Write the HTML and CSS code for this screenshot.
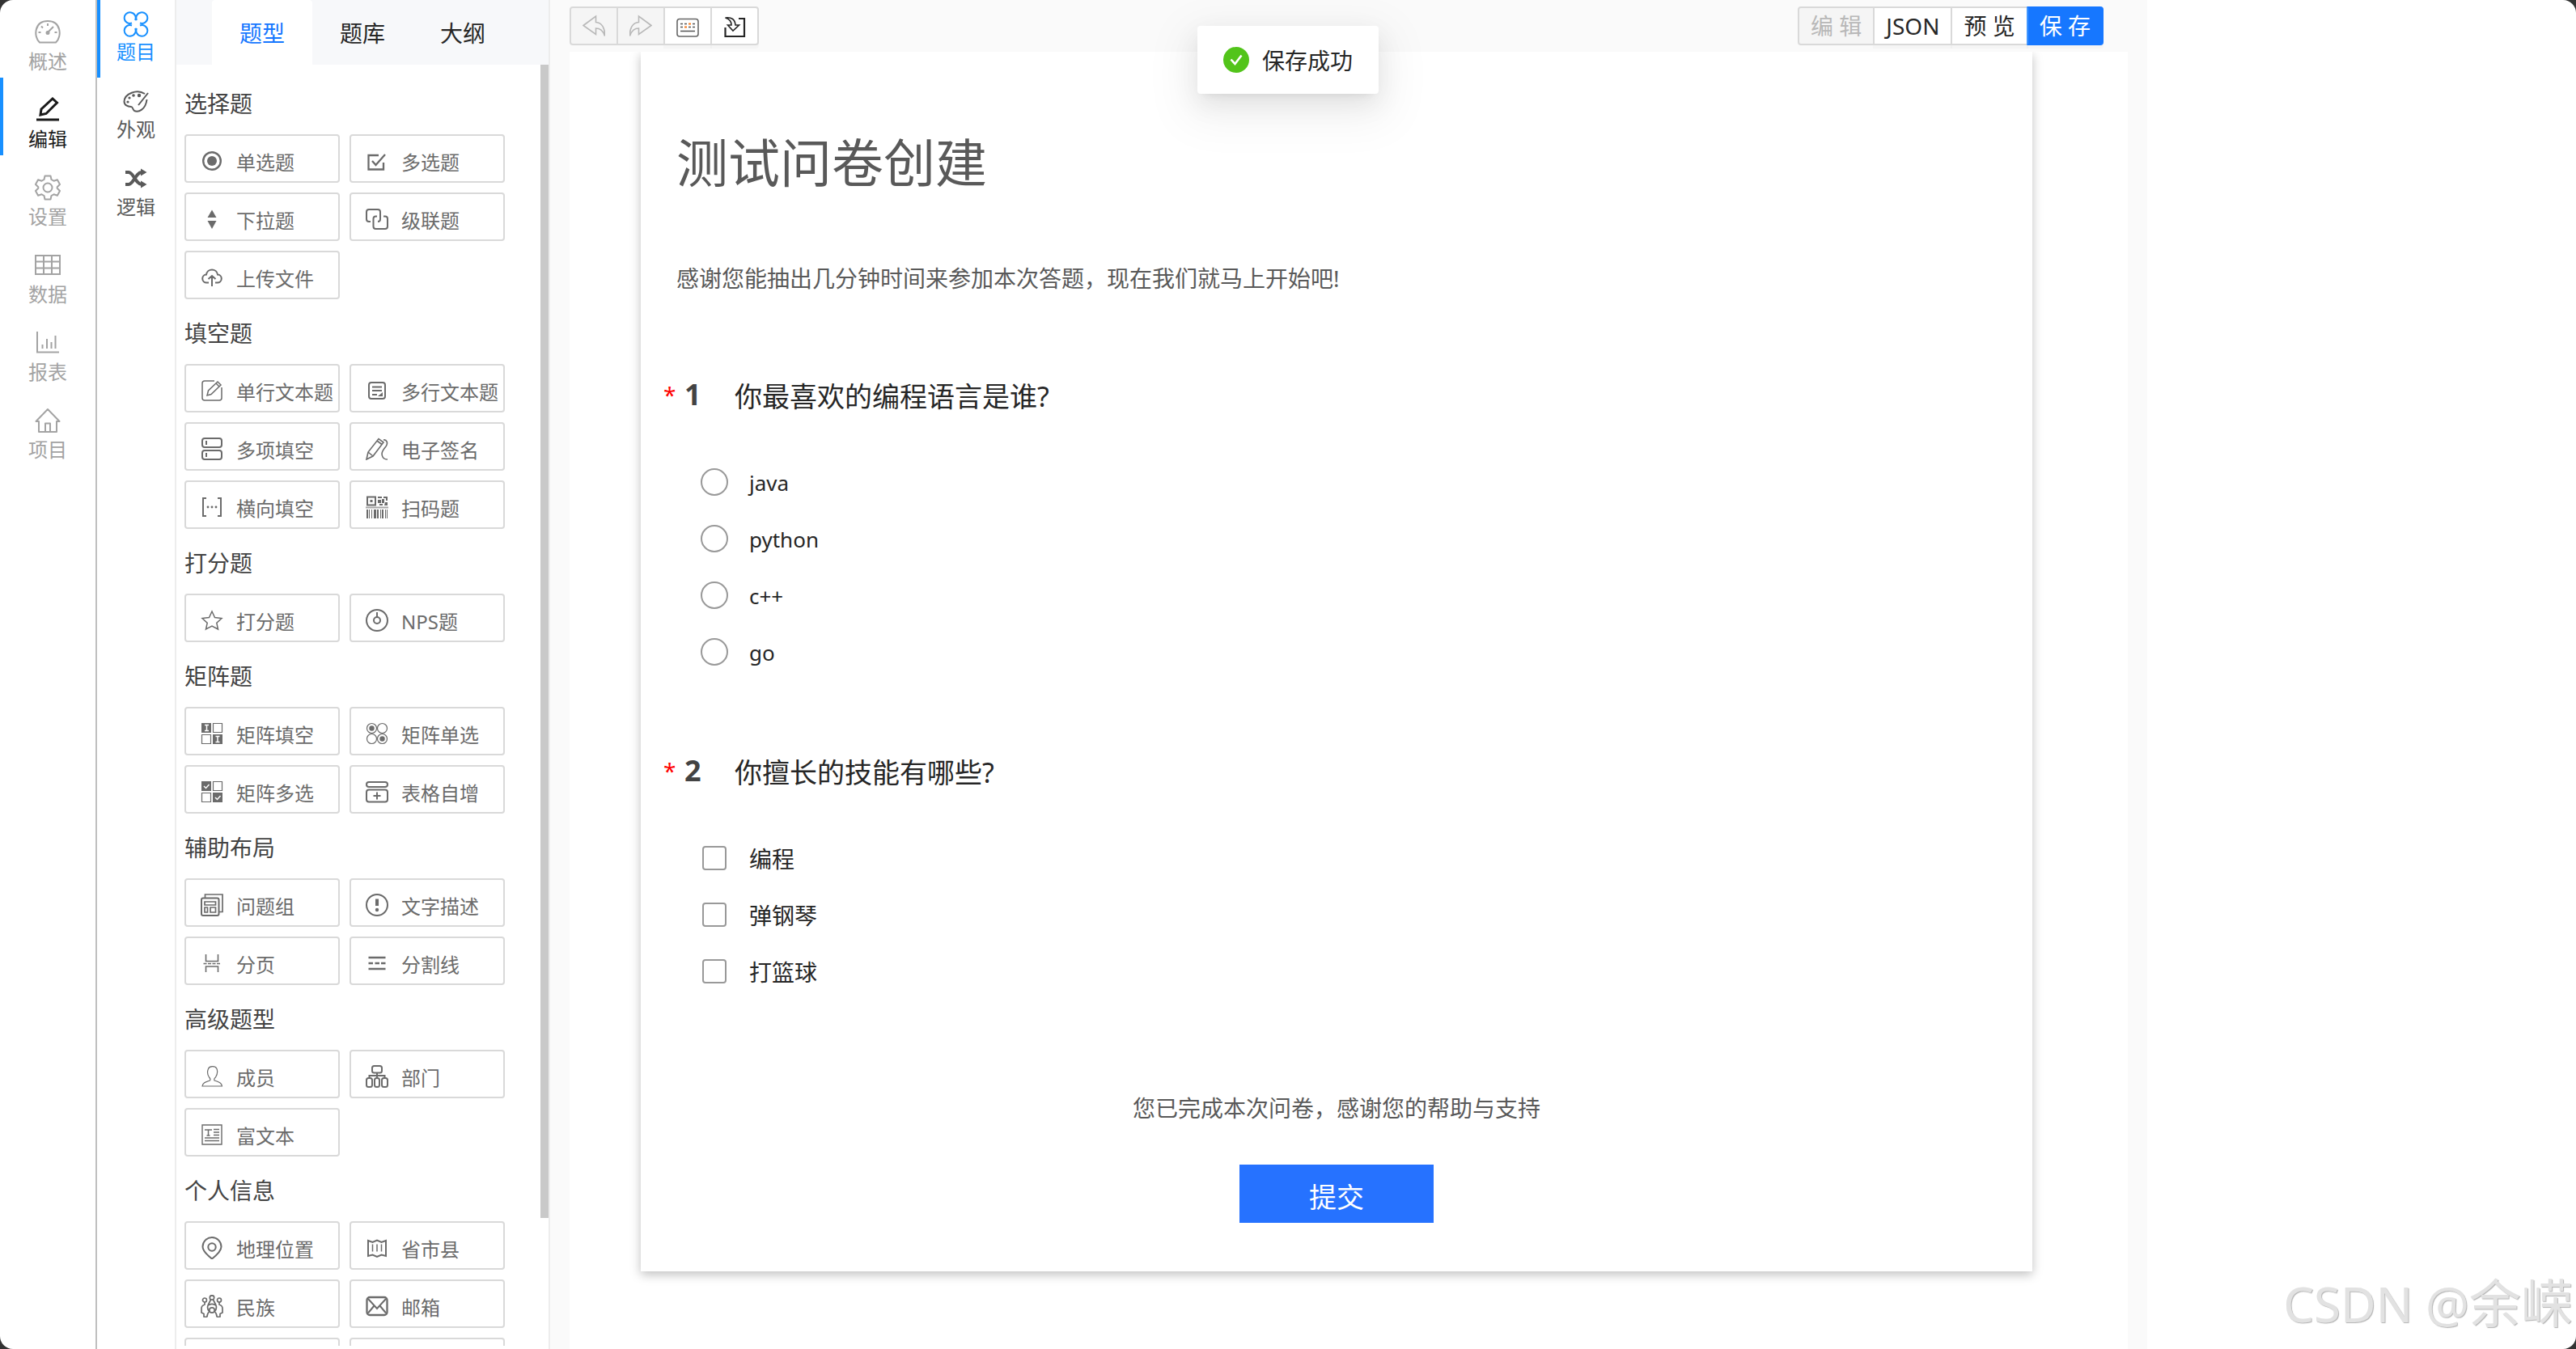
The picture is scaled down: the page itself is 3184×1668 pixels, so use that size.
FILE: index.html
```html
<!DOCTYPE html>
<html lang="zh-CN">
<head>
<meta charset="utf-8">
<title>测试问卷创建</title>
<meta name="viewport" content="width=device-width, initial-scale=1">
<link rel="stylesheet" href="styles.css">
</head>
<body>
<div class="app">
  <nav class="nav nav-main" aria-label="项目">
    <a class="nav-item" href="#overview">
      <svg class="nav-icon" viewBox="0 0 32 32"><path d="M6 28.500C-2 21-.500 2 16 2s18 19 10 26.500z"/><path d="M16 5v3M4.500 16h3M24.500 16h3M8 8.500l2 2M15 17l8-8"/><circle cx="16" cy="16.500" r="1.500"/></svg>
      <span>概述</span></a>
    <a class="nav-item active" href="#edit">
      <svg class="nav-icon bold" viewBox="0 0 32 32"><path d="M7 22l1-7L22 2l5.500 5L14 20.500z"/><path d="M2 28h28"/></svg>
      <span>编辑</span></a>
    <a class="nav-item" href="#settings">
      <svg class="nav-icon" viewBox="0 0 32 32"><path d="M12.500 1.500h7l1 4.500 3 1.700 4.400-1.400 3.100 5.700-3.300 3.200v1.600l3.300 3.200-3.100 5.700-4.400-1.400-3 1.700-1 4.500h-7l-1-4.500-3-1.700-4.400 1.400L1 20l3.300-3.200v-1.600L1 12l3.100-5.700 4.400 1.400 3-1.700z" stroke-linejoin="round"/><circle cx="16" cy="16" r="5.500"/></svg>
      <span>设置</span></a>
    <a class="nav-item" href="#data">
      <svg class="nav-icon" viewBox="0 0 32 32"><path d="M1 4h30v23H1zM1 11.500h30M1 19.500h30M11 4v23M21 4v23"/></svg>
      <span>数据</span></a>
    <a class="nav-item" href="#report">
      <svg class="nav-icon" viewBox="0 0 32 32"><path d="M3 2v25.500h27M9.500 23v-5M15 23V11M20.500 23v-8M25.500 23V7"/></svg>
      <span>报表</span></a>
    <a class="nav-item" href="#project">
      <svg class="nav-icon" viewBox="0 0 32 32"><path d="M5 17H1.500L16 2l14.500 15H27v13H5zM13 30V19.500h6V30" stroke-linejoin="round"/></svg>
      <span>项目</span></a>
  </nav>

  <nav class="nav nav-sub" aria-label="编辑">
    <a class="nav-item active" href="#questions">
      <svg class="nav-icon" viewBox="0 0 32 32"><path d="M11 14.500A7 6.800 0 1 1 15 11M21 14.500A7 6.800 0 1 0 17 11M11 17.500A7 6.800 0 1 0 15 21M21 17.500A7 6.800 0 1 1 17 21"/></svg>
      <span>题目</span></a>
    <a class="nav-item" href="#appearance">
      <svg class="nav-icon" viewBox="0 0 32 32"><path d="M27 6C17-.500 2 6 1.500 15.500 1.500 20 6 22 10 22c2.500 0 1.500 3 4 5 5 2 14-1 15.500-14M31 5L19 20"/><g class="solid"><circle cx="6" cy="16" r="1.600"/><circle cx="8" cy="11" r="1.600"/><circle cx="13" cy="8" r="1.800"/><circle cx="20" cy="8" r="2.200"/></g></svg>
      <span>外观</span></a>
    <a class="nav-item" href="#logic">
      <svg class="nav-icon heavy" viewBox="0 0 32 32"><path d="M3 7h4c6 0 9 15 16 15M3 22h4c6 0 9-15 16-15"/><path class="solid" d="M22 2.500L29.500 7 22 11.500zM22 17.500l7.500 4.500-7.500 4.500z"/></svg>
      <span>逻辑</span></a>
  </nav>

  <aside class="panel">
    <div class="tabs" role="tablist">
      <button class="tab active" role="tab" aria-selected="true">题型</button>
      <button class="tab" role="tab" aria-selected="false">题库</button>
      <button class="tab" role="tab" aria-selected="false">大纲</button>
    </div>
    <div class="list">
      <section class="group">
        <h3>选择题</h3>
        <div class="types">
          <button class="type"><svg viewBox="0 0 28 28"><circle cx="14" cy="14" r="10.800" stroke-width="2.400"/><circle class="solid" cx="14" cy="14" r="6"/></svg>单选题</button>
          <button class="type"><svg viewBox="0 0 28 28"><path d="M16 7H3.500v17.500h18.500V16M8 14l4.500 5L24 6" stroke-width="2.300"/></svg>多选题</button>
          <button class="type"><svg viewBox="0 0 28 28"><path class="solid" d="M14 2.500L19.500 12h-11zM8.500 16h11L14 26z"/></svg>下拉题</button>
          <button class="type"><svg viewBox="0 0 28 28"><path d="M6 17H4a3 3 0 0 1-3-3V5a3 3 0 0 1 3-3h11a3 3 0 0 1 3 3v9a3 3 0 0 1-3 3M14 10.500h-1.500a3 3 0 0 0-3 3V23a3 3 0 0 0 3 3H24a3 3 0 0 0 3-3v-9.500a3 3 0 0 0-3-3h-2"/></svg>级联题</button>
          <button class="type"><svg viewBox="0 0 28 28"><path d="M10 20.500H7.500A5 5 0 0 1 7 10.500C8 2.500 20 2.500 21 10.500a5 5 0 0 1-.500 10H18M14 25V12M9.500 16l4.500-4 4.500 4"/></svg>上传文件</button>
        </div>
      </section>
      <section class="group">
        <h3>填空题</h3>
        <div class="types">
          <button class="type"><svg viewBox="0 0 28 28"><path d="M17 2H5a3 3 0 0 0-3 3v18a3 3 0 0 0 3 3h18a3 3 0 0 0 3-3V10M8 20l1.500-6L21 3l4 4-12 11.500zM19 5l4 4" stroke-width="1.500"/></svg>单行文本题</button>
          <button class="type"><svg viewBox="0 0 28 28"><rect x="4" y="4" width="20" height="20" rx="3"/><path d="M8 9.500h12M8 14h12M8 19h6"/><path class="solid" d="M21 16v5h-6z"/></svg>多行文本题</button>
          <button class="type"><svg viewBox="0 0 28 28"><rect x="2" y="1" width="24" height="11" rx="3"/><rect x="2" y="16" width="24" height="11" rx="3"/><path d="M7 4v5M7 19v5"/></svg>多项填空</button>
          <button class="type"><svg viewBox="0 0 28 28"><path d="M1 27l2-9L16 1.500l6 4.500L9 23zM3 18l6 5M14 4l6 4.500M22 3c4-1 6 4 3 8-5 6-6 9-4 13 1 2 3 3 6 3" stroke-width="1.600"/></svg>电子签名</button>
          <button class="type"><svg viewBox="0 0 28 28"><path d="M7 3H3v22h4M21 3h4v22h-4"/><g class="solid"><circle cx="9" cy="14" r="1.400"/><circle cx="14" cy="14" r="1.400"/><circle cx="19" cy="14" r="1.400"/></g></svg>横向填空</button>
          <button class="type"><svg viewBox="0 0 28 28"><path d="M2 1.500h10v10H2z"/><path class="solid" d="M5.500 5h3v3h-3zM15 1h5v2h-5zM22 1h5v5h-2V3h-3zM15 5h4v4h-4zM20 4h3v5h-3zM24 8h3v4h-4zM17 10h4v2h-4zM1 17h2v11H1zM4 17h1v11H4zM7 17h1v11H7zM10 17h3v11h-3zM14 17h2v11h-2zM18 17h1v11h-1zM20 17h2v11h-2zM24 17h1v11h-1zM26 17h1v11h-1z"/><path d="M0 14.500h28" opacity=".6"/></svg>扫码题</button>
        </div>
      </section>
      <section class="group">
        <h3>打分题</h3>
        <div class="types">
          <button class="type"><svg viewBox="0 0 28 28"><path d="M14 3l3.500 7.500 8.500 1-6.200 5.700L21.500 25 14 21l-7.500 4 1.700-7.800L2 11.500l8.500-1z" stroke-width="1.500"/></svg>打分题</button>
          <button class="type"><svg viewBox="0 0 28 28"><circle cx="14" cy="14" r="13"/><circle cx="14" cy="14" r="4"/><path d="M14 4v6"/></svg>NPS题</button>
        </div>
      </section>
      <section class="group">
        <h3>矩阵题</h3>
        <div class="types">
          <button class="type"><svg viewBox="0 0 28 28"><path class="solid" d="M1 1h12v12H1zM15 15h12v12H15z"/><path d="M15.500 1.500h11v11h-11zM1.500 15.500h11v11h-11z" stroke-width="1.200"/><path class="light" d="M5 3.500h5M5 10.500h5M7.500 3.500v7M18.500 17.500h5M18.500 24.500h5M21 17.500v7"/></svg>矩阵填空</button>
          <button class="type"><svg viewBox="0 0 28 28"><g stroke-width="1.200"><circle cx="7.500" cy="7.500" r="6"/><circle cx="20.500" cy="7.500" r="6"/><circle cx="7.500" cy="20.500" r="6"/><circle cx="20.500" cy="20.500" r="6"/></g><g class="solid"><circle cx="7.500" cy="7.500" r="3.200"/><circle cx="20.500" cy="20.500" r="3.200"/></g></svg>矩阵单选</button>
          <button class="type"><svg viewBox="0 0 28 28"><path class="solid" d="M1 1h12v12H1zM15 15h12v12H15z"/><path d="M15.500 1.500h11v11h-11zM1.500 15.500h11v11h-11z" stroke-width="1.200"/><path class="light" d="M4 7l2.500 2.500L10.500 5M18 21l2.500 2.500 4-4.500"/></svg>矩阵多选</button>
          <button class="type"><svg viewBox="0 0 28 28"><rect x="1" y="2" width="26" height="6" rx="3"/><rect x="1" y="11.500" width="26" height="15" rx="3"/><path d="M14 14.500v9M9.500 19h9"/></svg>表格自增</button>
        </div>
      </section>
      <section class="group">
        <h3>辅助布局</h3>
        <div class="types">
          <button class="type"><svg viewBox="0 0 28 28"><rect x="1" y="5.500" width="21.500" height="21.500" rx="2"/><path d="M5.500 5V1H27v21.500h-4M5 10h13.500v4H5zM5 17h3.500v6H5zM12 17h6.500v6H12z" stroke-width="1.700"/></svg>问题组</button>
          <button class="type"><svg viewBox="0 0 28 28"><circle cx="14" cy="14" r="13"/><path d="M14 6.500v8.500" stroke-width="4"/><circle class="solid" cx="14" cy="20" r="2.200"/></svg>文字描述</button>
          <button class="type"><svg viewBox="0 0 28 28"><path d="M6.500 3v8.500h15V3M6.500 25v-7h15v7" stroke-width="1.600"/><path d="M3.500 14.500h21" stroke-dasharray="4 1.500" stroke-width="1.500"/></svg>分页</button>
          <button class="type"><svg viewBox="0 0 28 28"><path d="M3.500 7h21M3.500 14h5.500M11.500 14h5.500M19 14h5.500M3.500 21h21" stroke-width="2.400"/></svg>分割线</button>
        </div>
      </section>
      <section class="group">
        <h3>高级题型</h3>
        <div class="types">
          <button class="type"><svg viewBox="0 0 28 28"><path d="M17 19c6 2 9 3 9.500 7H2c.500-4 3.500-5 9.500-7 1-1.500 0-3-1-4-2-3-2.500-7-1-10.500C11 1 18 .500 20 4.500c1 3 .5 7.500-1.500 10.500-1.500 1-2 2.500-1.500 4z" stroke-width="1.200"/></svg>成员</button>
          <button class="type"><svg viewBox="0 0 28 28"><rect x="8" y="1" width="12" height="8.500" rx="2.500"/><path d="M14 9.500V16M4.500 16v-3h19v3"/><rect x="1" y="16" width="7" height="11" rx="2.500"/><rect x="11" y="16" width="6" height="11" rx="2.500"/><rect x="20" y="16" width="7" height="11" rx="2.500"/></svg>部门</button>
          <button class="type"><svg viewBox="0 0 28 28"><path d="M2 2h24v24H2z" stroke-width="1.400"/><path d="M5 8h9M9.500 8v7M7.500 15h4M16 7.500h7M16 11h7M16 14.500h7M5 18h18M5 21.500h18" stroke-width="1.500"/></svg>富文本</button>
        </div>
      </section>
      <section class="group">
        <h3>个人信息</h3>
        <div class="types">
          <button class="type"><svg viewBox="0 0 28 28"><path d="M14 27.500C7 22 2.500 17.500 2.500 12.500a11.500 11.500 0 0 1 23 0c0 5-4.500 9.500-11.500 15z"/><circle cx="14" cy="13" r="4.700"/></svg>地理位置</button>
          <button class="type"><svg viewBox="0 0 28 28"><path d="M3 5l5.500 2L14 4.500 19.500 7 25 5v19l-5.500-1.500L14 25l-5.500-2.500L3 24z"/><path d="M8.500 9.500v9M14 9.500v9M19.500 9.500v9" stroke-width="1.500"/></svg>省市县</button>
          <button class="type"><svg viewBox="0 0 28 28"><g stroke-width="1.700"><circle cx="14" cy="3.500" r="2.700"/><circle cx="5" cy="6.500" r="2.500"/><circle cx="23" cy="6.500" r="2.500"/><path d="M12.500 6L9 13M15.500 6l3.500 7M5 9v3c-3 1-4 3-4 5v5l3 1.500V27l4 .5M23 9v3c3 1 4 3 4 5v5l-3 1.500V27l-4 .5M9 13c-1 3 0 6 2 8M19 13c1 3 0 6-2 8M9 13c3-2 7-2 10 0M8 27.500c0-4 2-6.500 3-6.500M20 27.500c0-4-2-6.500-3-6.500"/><circle cx="14" cy="19" r="3.200"/></g></svg>民族</button>
          <button class="type"><svg viewBox="0 0 28 28"><rect x="1.500" y="3" width="25" height="22" rx="3.500" stroke-width="2.300"/><path d="M3 5l11 12L25 5M3 22.500l7.500-9M25 22.500l-7.500-9"/></svg>邮箱</button>
          <button class="type" aria-label="手机号"></button>
          <button class="type" aria-label="身份证"></button>
        </div>
      </section>
      <div class="thumb"></div>
    </div>
  </aside>

  <main class="workspace">
    <header class="toolbar">
      <div class="btn-group">
        <button class="btn icon-btn" disabled aria-label="撤销"><svg viewBox="0 0 28 28"><path d="M1 13.500L16.500 2v7.500C24 10 28 17 27.500 26.500 25.500 20 22 17 16.500 17v7.500z"/></svg></button>
        <button class="btn icon-btn" disabled aria-label="重做"><svg viewBox="0 0 28 28"><path d="M27 13.500L11.500 2v7.500C4 10 0 17 .5 26.500 2.500 20 6 17 11.500 17v7.500z"/></svg></button>
        <button class="btn icon-btn" aria-label="快捷键"><svg viewBox="0 0 28 28"><rect x="1" y="5.500" width="26" height="21.500" rx="3" stroke="#666"/><path d="M5 11.500h3M10 11.500h3M20 11.500h3M5 15.500h3M15 15.500h3M20 15.500h3M5 20.500h18" stroke="#555"/><path d="M15 11.500h3M10 15.500h3" stroke="#f77a1d" stroke-width="2"/></svg></button>
        <button class="btn icon-btn" aria-label="导入"><svg viewBox="0 0 28 28"><path d="M2.500 16v11H26V5h-7" stroke-width="2.200"/><path d="M2.500 4c8-1 12 2 12.500 9h4.500l-7.500 7-6.500-7H10c0-5-2-7.500-7.500-9z"/></svg></button>
      </div>
      <div class="btn-group">
        <button class="btn" disabled>编 辑</button>
        <button class="btn">JSON</button>
        <button class="btn">预 览</button>
        <button class="btn primary">保 存</button>
      </div>
    </header>
    <div class="canvas">
      <form class="survey">
        <h1>测试问卷创建</h1>
        <p class="intro">感谢您能抽出几分钟时间来参加本次答题，现在我们就马上开始吧!</p>

        <fieldset class="question">
          <legend class="q-head"><span class="star">*</span><span class="num">1</span><span class="q-title">你最喜欢的编程语言是谁?</span></legend>
          <label class="option"><input type="radio" name="lang"><span class="latin">java</span></label>
          <label class="option"><input type="radio" name="lang"><span class="latin">python</span></label>
          <label class="option"><input type="radio" name="lang"><span class="latin">c++</span></label>
          <label class="option"><input type="radio" name="lang"><span class="latin">go</span></label>
        </fieldset>

        <fieldset class="question">
          <legend class="q-head"><span class="star">*</span><span class="num">2</span><span class="q-title">你擅长的技能有哪些?</span></legend>
          <label class="option"><input type="checkbox" name="skill"><span>编程</span></label>
          <label class="option"><input type="checkbox" name="skill"><span>弹钢琴</span></label>
          <label class="option"><input type="checkbox" name="skill"><span>打篮球</span></label>
        </fieldset>

        <p class="outro">您已完成本次问卷，感谢您的帮助与支持</p>
        <button class="submit" type="button">提交</button>
      </form>
    </div>
  </main>
  <div class="blank"></div>

  <div class="toast" role="status">
    <svg viewBox="0 0 32 32"><circle cx="16" cy="16" r="16" fill="#52c41a"/><path d="M9.500 15.500l5 5.500 8-10.500" fill="none" stroke="#fff" stroke-width="2.600"/></svg>
    <span>保存成功</span>
  </div>
  <div class="watermark"><span class="wm-latin">CSDN @</span>余嵘</div>
</div>
</body>
</html>
```
FILE: styles.css
```css
* {
  box-sizing: border-box;
}

html {
  background: #333;
}

body,
h1,
h3,
p {
  margin: 0;
  font-weight: 400;
}

body {
  font-family: "Noto Sans", "Noto Sans CJK SC", sans-serif;
  font-size: 28px;
  color: #262626;
}

button {
  font: inherit;
  color: inherit;
  cursor: pointer;
}

svg {
  display: block;
  flex: none;
  fill: none;
  stroke: currentColor;
  stroke-width: 2;
}

.solid {
  fill: currentColor;
  stroke: none;
}

.app {
  position: relative;
  display: flex;
  height: 100vh;
  overflow: hidden;
  background: #fff;
  border-radius: 16px;
}

/* Navigation rails */
.nav {
  flex: none;
  display: flex;
  flex-direction: column;
}

.nav-main {
  width: 120px;
  border-right: 2px solid #bfbfbf;
}

.nav-sub {
  width: 98px;
  border-right: 2px solid #ededed;
}

.nav-item {
  display: flex;
  flex-direction: column;
  align-items: center;
  height: 96px;
  font-size: 24px;
  text-decoration: none;
}

.nav-main .nav-item {
  padding-top: 24px;
  line-height: 40px;
  color: #a3a3a3;
}

.nav-sub .nav-item {
  padding-top: 14px;
  line-height: 36px;
  color: #595959;
}

.nav-main .active {
  color: #1a1a1a;
  box-shadow: inset 4px 0 #1890ff;
}

.nav-sub .active {
  color: #1890ff;
  box-shadow: inset 4px 0 #1890ff;
}

.nav-icon {
  width: 32px;
  height: 32px;
}

.nav-icon.bold {
  stroke-width: 3;
}

.nav-icon.heavy {
  stroke-width: 4;
}

/* Question type panel */
.panel {
  flex: none;
  display: flex;
  flex-direction: column;
  width: 462px;
  padding-bottom: 4px;
  border-right: 2px solid #ededed;
}

.tabs {
  display: flex;
  flex: none;
  height: 80px;
  padding-left: 44px;
  background: #f7f8fa;
}

.tab {
  width: 124px;
  padding: 0;
  border: 0;
  border-radius: 4px 4px 0 0;
  background: none;
}

.tab.active {
  background: #fff;
  color: #1677ff;
}

.list {
  position: relative;
  flex: 1;
  min-height: 0;
  overflow: hidden;
  padding: 18px 10px 0;
}

.thumb {
  position: absolute;
  top: 0;
  right: 0;
  width: 10px;
  height: 90%;
  background: #c9c9c9;
}

.group h3 {
  padding: 8px 0 16px;
  font-size: 28px;
  line-height: 44px;
  color: #434343;
}

.types {
  display: grid;
  grid-template-columns: 192px 192px;
  gap: 12px;
  padding-bottom: 12px;
}

.type {
  display: flex;
  align-items: center;
  gap: 16px;
  height: 60px;
  padding: 6px 0 0 18px;
  border: 2px solid #d9d9d9;
  border-radius: 4px;
  background: #fff;
  color: #6b6b6b;
  font-size: 24px;
  white-space: nowrap;
}

.type svg {
  width: 28px;
  height: 28px;
}

.light {
  stroke: #fff;
  stroke-width: 1.5;
}

/* Workspace */
.workspace {
  flex: 1;
  min-width: 0;
  display: flex;
  flex-direction: column;
  background: #fafafa;
}

.blank {
  flex: none;
  width: 530px;
}

.toolbar {
  display: flex;
  justify-content: space-between;
  flex: none;
  padding: 8px 54px 8px 24px;
}

.btn-group {
  display: flex;
}

.btn {
  height: 48px;
  padding: 0 14px;
  border: 2px solid #d9d9d9;
  background: #fff;
  box-shadow: 0 4px 0 rgba(0, 0, 0, 0.02);
  line-height: 44px;
}

.btn + .btn {
  margin-left: -2px;
}

.btn:first-child {
  border-radius: 4px 0 0 4px;
}

.btn:last-child {
  border-radius: 0 4px 4px 0;
}

.btn:disabled {
  background: #f5f5f5;
  color: #b8b8b8;
  box-shadow: none;
}

.btn.primary {
  border-color: #1677ff;
  border-left-color: #4096ff;
  background: #1677ff;
  color: #fff;
}

.icon-btn svg {
  width: 28px;
  height: 28px;
  stroke-width: 1.6;
}

.canvas {
  flex: 1;
  min-height: 0;
  margin: 0 24px;
  padding: 0 118px 0 88px;
  overflow: hidden;
  background: #fff;
}

.survey {
  padding: 90px 28px 60px;
  background: #fff;
  box-shadow: 0 4px 12px rgba(0, 0, 0, 0.25);
}

.survey h1 {
  padding-left: 16px;
  font-size: 64px;
  line-height: 94px;
  color: #595959;
}

.intro {
  margin: 72px 0 98px;
  padding-left: 16px;
  line-height: 48px;
  color: #595959;
}

.question {
  margin: 0 0 90px;
  padding: 0;
  border: 0;
}

.q-head {
  display: grid;
  grid-template-columns: 26px 62px 1fr;
  align-items: start;
  padding: 0;
  margin-bottom: 45px;
}

.star {
  line-height: 44px;
  color: #f00;
}

.num {
  font-size: 36px;
  font-weight: 700;
  line-height: 44px;
  color: #434343;
}

.q-title {
  font-size: 34px;
  line-height: 48px;
  padding-bottom: 2px;
}

.option {
  display: grid;
  grid-template-columns: 34px 1fr;
  align-items: center;
  justify-items: center;
  gap: 26px;
  height: 70px;
  padding-left: 46px;
}

.option span {
  justify-self: start;
  padding-top: 2px;
  line-height: 40px;
}

.option .latin {
  font-size: 26px;
}

.option input {
  appearance: none;
  width: 30px;
  height: 30px;
  margin: 0;
  border: 2px solid #999;
  border-radius: 4px;
  background: #fff;
}

.option input[type="radio"] {
  width: 34px;
  height: 34px;
  border-radius: 50%;
}

.outro {
  margin: 110px 0 46px;
  line-height: 48px;
  text-align: center;
  color: #595959;
}

.submit {
  display: block;
  width: 240px;
  height: 72px;
  margin: 0 auto;
  padding: 4px 0 0;
  border: 0;
  background: #2672ff;
  color: #fff;
  font-size: 34px;
}

/* Overlays */
.toast {
  position: absolute;
  top: 32px;
  left: 50%;
  transform: translateX(-50%);
  display: flex;
  align-items: center;
  gap: 16px;
  height: 84px;
  padding: 0 32px;
  border-radius: 4px;
  background: #fff;
  box-shadow: 0 6px 12px -8px rgba(0, 0, 0, 0.12), 0 12px 32px rgba(0, 0, 0, 0.08), 0 18px 56px 16px rgba(0, 0, 0, 0.05);
}

.toast svg {
  width: 32px;
  height: 32px;
  stroke: none;
}

.watermark {
  position: absolute;
  right: 4px;
  bottom: 8px;
  font-size: 64px;
  line-height: 96px;
  color: #e2e2e2;
  text-shadow: 1px 1px 1px #b3b3b3;
}

.wm-latin {
  font-size: 60px;
}
```
